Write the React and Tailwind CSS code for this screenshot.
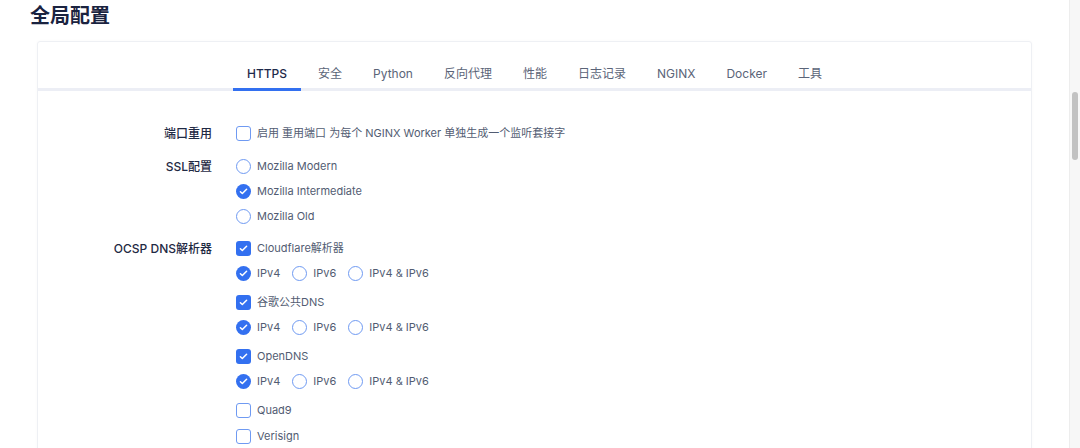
import React, { useState } from "react";

const tabs = ["HTTPS", "安全", "Python", "反向代理", "性能", "日志记录", "NGINX", "Docker", "工具"];

// blue check mark used by both checkbox and radio
const Tick = () => (
  <svg viewBox="0 0 16 16" className="w-[11px] h-[11px]" fill="none">
    <path d="M3.5 8.3l2.8 2.7 6.2-6.3" stroke="white" strokeWidth="2.2" strokeLinecap="round" strokeLinejoin="round" />
  </svg>
);

const Box = ({ checked }) => (
  <span
    className={
      checked
        ? "w-[15px] h-[15px] rounded-[3px] bg-[#3370f0] flex items-center justify-center shrink-0"
        : "w-[15px] h-[15px] rounded-[3px] border border-[#6f9af2] bg-white shrink-0"
    }
  >
    {checked && <Tick />}
  </span>
);

const Radio = ({ checked }) => (
  <span
    className={
      checked
        ? "w-[15px] h-[15px] rounded-full bg-[#3370f0] flex items-center justify-center shrink-0"
        : "w-[15px] h-[15px] rounded-full border border-[#6f9af2] bg-white shrink-0"
    }
  >
    {checked && <Tick />}
  </span>
);

const Option = ({ children, checked, round }) => (
  <label className="flex items-center gap-[6px] h-[25px]">
    {round ? <Radio checked={checked} /> : <Box checked={checked} />}
    <span className="text-[11px] text-[#525c72]">{children}</span>
  </label>
);

const IpRow = ({ value }) => (
  <div className="flex items-center gap-[12px]">
    {["IPv4", "IPv6", "IPv4 & IPv6"].map((ip) => (
      <Option key={ip} round checked={ip === value}>
        {ip}
      </Option>
    ))}
  </div>
);

const Label = ({ children }) => (
  <div className="h-[25px] flex items-center justify-end text-[12px] font-medium text-[#1f2a44]">{children}</div>
);

const Row = ({ label, children, className = "" }) => (
  <div className={"flex gap-[24px] " + className}>
    <div className="w-[174px] shrink-0">
      <Label>{label}</Label>
    </div>
    <div className="flex flex-col">{children}</div>
  </div>
);

const App = () => {
  const [active, setActive] = useState("HTTPS");

  return (
    <div
      className="h-[448px] overflow-hidden flex bg-white"
      style={{ fontFamily: "Inter, 'Noto Sans CJK SC', sans-serif" }}
    >
      <div className="flex-1 min-w-0">
        <h1 className="pl-[30px] pt-[2px] h-[41px] text-[20px] leading-[28px] font-bold text-[#1a2340]">全局配置</h1>

        <div className="mx-[37px] border border-[#eef0f4] rounded-[3px] shadow-[0_0_3px_rgba(0,0,0,0.03)] h-[420px]">
          {/* TABS */}
          <div className="pt-[22px] flex justify-center gap-[3px] border-b-[3px] border-[#eceef5]">
            {tabs.map((t) => (
              <button
                key={t}
                onClick={() => setActive(t)}
                className={
                  t === active
                    ? "px-[14px] h-[27px] pb-[4px] -mb-[3px] border-b-[3px] border-[#3370f0] text-[12px] font-medium text-[#1e2a4a]"
                    : "px-[14px] h-[27px] pb-[4px] -mb-[3px] border-b-[3px] border-transparent text-[12px] text-[#5b6478]"
                }
              >
                {t}
              </button>
            ))}
          </div>

          {/* FORM */}
          <div className="pt-[30px]">
            <Row label="端口重用">
              <Option>启用 重用端口 为每个 NGINX Worker 单独生成一个监听套接字</Option>
            </Row>

            <Row label="SSL配置" className="mt-[8px]">
              <Option round>Mozilla Modern</Option>
              <Option round checked>Mozilla Intermediate</Option>
              <Option round>Mozilla Old</Option>
            </Row>

            <Row label="OCSP DNS解析器" className="mt-[7px]">
              <Option checked>Cloudflare解析器</Option>
              <IpRow value="IPv4" />
              <div className="mt-[4px]">
                <Option checked>谷歌公共DNS</Option>
              </div>
              <IpRow value="IPv4" />
              <div className="mt-[4px]">
                <Option checked>OpenDNS</Option>
              </div>
              <IpRow value="IPv4" />
              <div className="mt-[4px]">
                <Option>Quad9</Option>
              </div>
              <div className="mt-[1px]">
                <Option>Verisign</Option>
              </div>
            </Row>
          </div>
        </div>
      </div>

      {/* scrollbar */}
      <div className="w-[11px] shrink-0 bg-[#f7f7f7] border-l border-[#ededed] pt-[92px] flex justify-center">
        <div className="w-[6px] h-[68px] rounded-full bg-[#c2c2c2]" />
      </div>
    </div>
  );
};

export default App;
